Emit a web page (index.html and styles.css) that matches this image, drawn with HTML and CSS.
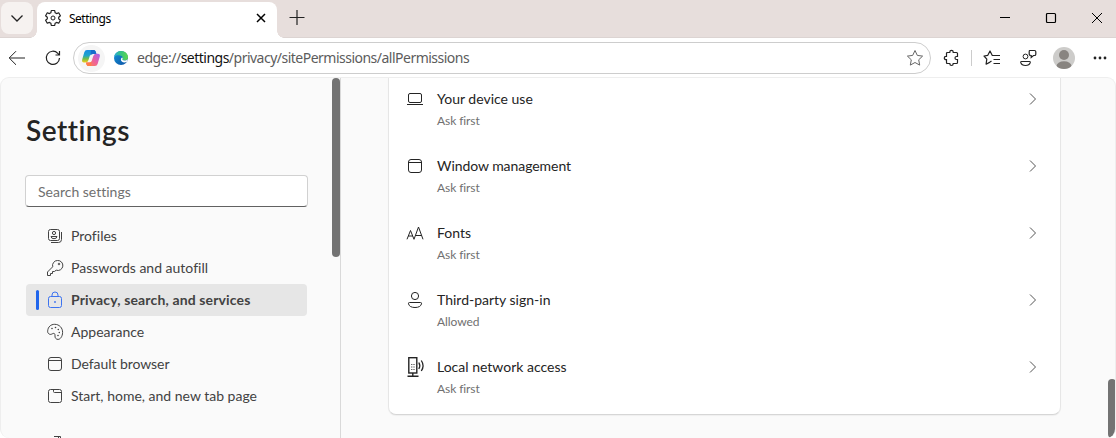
FILE: index.html
```html
<!DOCTYPE html>
<html lang="en">
<head>
<meta charset="utf-8">
<title>Settings</title>
<link rel="stylesheet" href="styles.css">
</head>
<body>
<div class="window">
  <header class="tabstrip">
    <div class="tab-menu"><svg width="16" height="16" viewBox="0 0 16 16"><path d="M2.500 5.500 8 11l5.500-5.500" stroke-width="1.300"/></svg></div>
    <div class="tab">
      <svg width="18" height="18" viewBox="0 0 18 18"><path d="M7.300 1.500h3.400l.4 2.200 1.500.9 2.100-.8 1.700 2.900-1.700 1.500v1.700l1.700 1.400-1.700 2.900-2.100-.8-1.500.9-.4 2.200H7.300l-.4-2.200-1.500-.9-2.100.8-1.700-2.900 1.700-1.400V8.200L1.600 6.700l1.700-2.900 2.100.8 1.500-.9z" stroke-linejoin="round" stroke-width="1.200"/><circle cx="9" cy="9" r="2"/></svg>
      <span class="tab-title">Settings</span>
      <svg class="tab-close" width="10" height="10" viewBox="0 0 10 10"><path d="m1 1 8 8M9 1 1 9" stroke-width="1.500"/></svg>
    </div>
    <svg class="tab-new" width="16" height="16" viewBox="0 0 16 16"><path d="M8 1v15M.5 8.500h15" stroke-width="1.200"/></svg>
    <div class="controls">
      <svg width="12" height="12" viewBox="0 0 12 12"><path d="M1 5.500h10"/></svg>
      <svg width="12" height="12" viewBox="0 0 12 12"><rect x="1.500" y="1.500" width="9" height="9" rx="1" stroke-width="1.200"/></svg>
      <svg width="12" height="12" viewBox="0 0 12 12"><path d="m1 1 10 10M11 1 1 11"/></svg>
    </div>
  </header>
  <nav class="toolbar">
    <svg class="back" width="18" height="16" viewBox="0 0 18 16"><path d="M1.500 8H17M8 1.200 1.200 8 8 14.800"/></svg>
    <svg class="reload" width="16" height="16" viewBox="0 0 16 16"><path d="M14.500 8A6.600 6.600 0 1 1 12.800 3.400L14.500 5M14.500 1v4h-4" stroke-width="1.200"/></svg>
    <div class="address">
      <span class="copilot"><svg width="20" height="18" viewBox="0 0 20 18">
        <defs>
          <linearGradient id="cool" x1="0" y1="0" x2="0" y2="1"><stop offset="0" stop-color="#188be5"/><stop offset=".45" stop-color="#1fa5c8"/><stop offset=".7" stop-color="#72bd48"/><stop offset="1" stop-color="#f5cc16"/></linearGradient>
          <linearGradient id="warm" x1="1" y1="0" x2="0" y2="1"><stop offset="0" stop-color="#a564ed"/><stop offset=".5" stop-color="#ee609b"/><stop offset="1" stop-color="#ff8a42"/></linearGradient>
        </defs>
        <path class="cool" d="M6 1h6.500q1.500 0 2 1.500L15.200 5H11q-1.600 0-2.100 1.600L7.500 11q-.8 2.500-3 2.500H3Q.5 13.500 1.200 10.500L3.300 3.200Q4 1 6 1z"/>
        <path class="blue" d="M10 1h3q1.200 0 1.700 1.500L15.500 5H12q-2 0-2.500 1.600z"/>
        <path class="warm" d="M14 17H7.500q-1.500 0-2-1.500L5 13.500h3.500q1.700 0 2.200-1.600L12.300 7q.8-2.200 3-2.200h1.500q2.700 0 2 2.800l-2.100 7.200Q16 17 14 17z"/>
        <path class="orange" d="M10 17H7.500Q6 17 5.500 15.500L5 13.500h3.500q1.500 0 2-1.500z"/>
      </svg></span>
      <svg class="edge" width="14" height="14" viewBox="0 0 14 14">
        <defs><linearGradient id="green"><stop offset="0" stop-color="#2baad8"/><stop offset=".5" stop-color="#36c47f"/><stop offset="1" stop-color="#60d64b"/></linearGradient><linearGradient id="deep" x1="0" y1="0" x2="1" y2="1"><stop offset="0" stop-color="#1595d6"/><stop offset="1" stop-color="#0b4fa5"/></linearGradient></defs>
        <circle class="deep" cx="7" cy="7" r="7"/>
        <path class="green" d="M.1 6C.7 2.500 3.500 0 7 0c4 0 7 2.800 7 6.200 0 2.100-1.500 3.300-3.500 3.300-1.800 0-2.500-.7-2-1.400C9.300 6.800 8.500 5 6 4.500 3.500 4 1.300 4.600.1 6z"/>
        <path class="hole" d="M8.500 8.100c-.5.900.4 1.500 2 1.400 1.300 0 2.500-.5 3.300-1.500l-.4 2.500c-3.200 1.900-6.600.6-6.500-2 0-1 .5-1.700 1.300-2.100.6.500.7 1.100.3 1.700z"/>
      </svg>
      <span class="url">edge://<b>settings</b>/privacy/sitePermissions/allPermissions</span>
      <svg class="star" width="18" height="18" viewBox="0 0 18 18"><path d="m9 1.500 2.300 4.900 5.300.7-3.900 3.700 1 5.300L9 13.500l-4.700 2.600 1-5.300L1.400 7.100l5.300-.7z" stroke-linejoin="round"/></svg>
    </div>
    <div class="tools">
      <svg class="puzzle" width="16" height="16" viewBox="0 0 16 16"><path d="M2.500 3.500q0-1 1-1h2.300V2a1.700 1.700 0 0 1 3.400 0v.5h3.300q1 0 1 1v3h-1a1.500 1.500 0 0 0 0 3h1v3q0 1-1 1H9.200v.3a1.700 1.700 0 0 1-3.400 0v-.3H3.500q-1 0-1-1V9.700H2a1.700 1.700 0 0 1 0-3.400h.5z" stroke-width="1.200"/></svg>
      <i class="divider"></i>
      <svg class="favorites" width="18" height="16" viewBox="0 0 18 16"><path d="M11 5.500H9.300L7 1 4.800 5.300 1 6l2.800 3.200-.7 5L7 12.100M10.500 5.500H17M10.500 9.500H17M10.500 13.500H17M7 12l1.500-1" stroke-linejoin="round" stroke-width="1.200"/></svg>
      <svg class="feedback" width="18" height="18" viewBox="0 0 18 18"><circle cx="6.500" cy="7.500" r="2.400"/><path d="M2.500 12.500h8q1 0 .7 1.200c-.6 2-2.400 2.800-4.700 2.800s-4.100-.8-4.700-2.800q-.3-1.200.7-1.200zM10.500 1.500h5q1.300 0 1.300 1.300v2.400q0 1.300-1.300 1.300h-1l-2.300 2V6.500q-2 0-2-1.300V2.800q0-1.300.3-1.300z" stroke-width="1.200"/></svg>
      <svg class="avatar" width="22" height="22" viewBox="0 0 22 22"><defs><clipPath id="round"><circle cx="11" cy="11" r="11"/></clipPath></defs><circle class="face" cx="11" cy="11" r="11"/><g class="person" clip-path="url(#round)"><circle cx="11" cy="8" r="5"/><ellipse cx="11" cy="19" rx="7.500" ry="4.700"/></g></svg>
      <svg class="dots" width="14" height="4" viewBox="0 0 14 4"><circle cx="2" cy="2" r="1.400"/><circle cx="7" cy="2" r="1.400"/><circle cx="12" cy="2" r="1.400"/></svg>
    </div>
  </nav>
  <div class="page">
    <aside class="sidebar">
      <h1>Settings</h1>
      <div class="search">Search settings</div>
      <ul class="menu">
        <li><svg width="16" height="16" viewBox="0 0 16 16"><rect x="1.500" y="1.500" width="11" height="11" rx="2"/><circle cx="7" cy="5" r="1.600"/><path d="M4 8.500h6q-.2 2.200-3 2.200t-3-2.200zM14.500 4v7.500q0 3-3 3H4"/></svg><span>Profiles</span></li>
        <li><svg width="18" height="18" viewBox="0 0 18 18"><path d="M11.500 1.500a5 5 0 0 0-4.800 6.300L1.500 13v3.500h3v-2h2v-2h1.900l1.800-1.300A5 5 0 1 0 11.500 1.500z" stroke-linejoin="round"/><circle cx="13" cy="5" r=".8"/></svg><span>Passwords and autofill</span></li>
        <li class="current"><svg width="16" height="18" viewBox="0 0 16 18"><rect x="1.500" y="5.500" width="13" height="11" rx="2"/><path d="M5 5.500V4a3 3 0 0 1 6 0v1.500"/><circle cx="8" cy="11" r=".6"/></svg><span>Privacy, search, and services</span></li>
        <li><svg width="18" height="18" viewBox="0 0 18 18"><path d="M1.700 7.800C2 4 4.700 1.300 8.700 1.300c4.600 0 8 3.600 7.900 8.200-.1 3.900-2.200 6.900-4.600 6.900-2 0-3.200-1.600-3-3.500.2-2.100-.8-3-2.200-2.300-1.500.8-2.400 1.100-3.500.5C1.900 10.300 1.500 9.200 1.700 7.800z"/><g class="paint"><circle cx="6" cy="5.500" r=".8"/><circle cx="9.500" cy="4.500" r=".8"/><circle cx="12.300" cy="6.500" r=".8"/><circle cx="13.300" cy="9.500" r=".8"/><circle cx="12" cy="12.500" r=".8"/></g></svg><span>Appearance</span></li>
        <li><svg width="16" height="16" viewBox="0 0 16 16"><rect x="1.500" y="1.500" width="13" height="13" rx="2.500"/><path d="M1.500 4.500h13"/></svg><span class="snug">Default browser</span></li>
        <li><svg width="16" height="16" viewBox="0 0 16 16"><rect x="1.500" y="1.500" width="13" height="13" rx="2"/><path d="M6.500 1.500v2q0 1 1 1h7"/></svg><span>Start, home, and new tab page</span></li>
        <li class="next"><svg width="16" height="16" viewBox="0 0 16 16"><path d="M7 1.500h6.500V8M11.500 4V1.500"/></svg></li>
      </ul>
      <i class="thumb"></i>
    </aside>
    <main class="content">
      <section class="card">
        <div class="row"><svg width="18" height="18" viewBox="0 0 18 18"><rect x="2.500" y="3.500" width="13" height="9" rx="1.500"/><path d="M1 14.500h16"/></svg><div class="label"><span>Your device use</span><small>Ask first</small></div><svg class="chevron" width="8" height="14" viewBox="0 0 8 14"><path d="m1 1.500 5.500 5.500L1 12.500"/></svg></div>
        <div class="row"><svg width="18" height="18" viewBox="0 0 18 18"><rect x="2.500" y="2.500" width="13" height="13" rx="2.500"/><path d="M2.500 5.500h13"/></svg><div class="label"><span class="snug">Window management</span><small>Ask first</small></div><svg class="chevron" width="8" height="14" viewBox="0 0 8 14"><path d="m1 1.500 5.500 5.500L1 12.500"/></svg></div>
        <div class="row"><svg width="18" height="18" viewBox="0 0 18 18"><path d="M1 15.300 4.500 6.500 8 15.300M2.200 12h4.600M8 15.300 12.500 3 17 15.300M9.500 11.500h6" stroke-linejoin="round"/></svg><div class="label"><span>Fonts</span><small>Ask first</small></div><svg class="chevron" width="8" height="14" viewBox="0 0 8 14"><path d="m1 1.500 5.500 5.500L1 12.500"/></svg></div>
        <div class="row"><svg width="18" height="18" viewBox="0 0 18 18"><circle cx="9" cy="5" r="3.600"/><path d="M3.500 11.500h11q1.300 0 1 1.300c-.6 2.500-2.900 3.700-6.500 3.700s-5.900-1.200-6.500-3.700q-.3-1.300 1-1.300z"/></svg><div class="label"><span>Third-party sign-in</span><small>Allowed</small></div><svg class="chevron" width="8" height="14" viewBox="0 0 8 14"><path d="m1 1.500 5.500 5.500L1 12.500"/></svg></div>
        <div class="row"><svg class="server" width="18" height="22" viewBox="0 0 18 22"><rect x="2.800" y="1.700" width="8" height="15.300" stroke-width="1.400"/><path d="M6.800 17v3M1.500 20.300h11" stroke-width="1.400"/><path d="M5.800 8v6M8 8v6" stroke-dasharray="1 1.500"/><path d="M12.800 6.500q2 3.200 0 6.500M15.300 4.500q3.500 5.200 0 10.500" stroke-width="1.300"/></svg><div class="label"><span>Local network access</span><small>Ask first</small></div><svg class="chevron" width="8" height="14" viewBox="0 0 8 14"><path d="m1 1.500 5.500 5.500L1 12.500"/></svg></div>
      </section>
      <i class="thumb"></i>
    </main>
  </div>
</div>
</body>
</html>
```
FILE: styles.css
```css
* { box-sizing: border-box; }
body { margin: 0; }
svg { display: block; flex: none; fill: none; stroke: currentColor; stroke-width: 1; overflow: visible; }
.window { width: 1116px; height: 438px; overflow: hidden; display: flex; flex-direction: column; background: #fff; color: #222; font-family: "Noto Sans", sans-serif; }

.tabstrip { height: 38px; flex: none; display: flex; background: #e7dedc; border-bottom: 1px solid #dcd4d2; }
.tab-menu { width: 32px; height: 32px; margin: 2px 4px 0 1px; border-radius: 8px; background: #f6f2f0; display: flex; align-items: center; justify-content: center; }
.tab { position: relative; width: 240px; height: 36px; margin-top: 2px; padding: 0 11px 4px 7px; display: flex; align-items: center; background: #fff; border-radius: 8px 8px 0 0; }
.tab::before, .tab::after { content: ""; position: absolute; bottom: 0; width: 7px; height: 7px; }
.tab::before { left: -7px; background: radial-gradient(circle at 0 0, transparent 6.500px, #fff 7px); }
.tab::after { right: -7px; background: radial-gradient(circle at 100% 0, transparent 6.500px, #fff 7px); }
.tab-title { margin-left: 7px; font-size: 12px; letter-spacing: -.5px; color: #000; }
.tab-close { margin-left: auto; color: #000; }
.tab-new { margin: 9px 0 0 12px; }
.controls { margin: 12px 13px 0 auto; display: flex; gap: 34px; color: #000; }

.toolbar { height: 39px; flex: none; display: flex; align-items: center; padding-top: 1px; }
.back { margin-left: 8px; }
.reload { margin-left: 19px; }
.address { width: 858px; height: 32px; margin-left: 12px; padding: 0 6px 0 4px; display: flex; align-items: center; border: 1px solid #cdcdcd; border-radius: 16px; }
.copilot { width: 27px; height: 27px; border-radius: 50%; background: #f5f5f5; display: flex; align-items: center; justify-content: center; }
.copilot svg { margin-right: 1px; }
.copilot svg, .edge, .person, .face { stroke: none; }
.cool { fill: url(#cool); }
.blue { fill: #176dcc; }
.warm { fill: url(#warm); }
.orange { fill: #ff7b48; }
.edge { margin-left: 9px; }
.deep { fill: url(#deep); }
.green { fill: url(#green); }
.hole { fill: #fff; }
.url { margin-left: 9px; font-size: 14px; line-height: 20px; letter-spacing: -.51px; white-space: nowrap; color: #5c5c5c; }
.url b { font-weight: 400; color: #111; }
.star { margin-left: auto; color: #666; }
.tools { display: flex; align-items: center; }
.puzzle { margin-left: 13px; }
.divider { width: 1px; height: 16px; margin-left: 11px; background: #ccc; }
.favorites { margin-left: 11px; }
.feedback { margin-left: 18px; }
.avatar { margin-left: 16px; }
.face { fill: #cdccca; }
.person { fill: #888480; }
.dots { margin-left: 18px; fill: currentColor; stroke: none; }

.page { flex: 1; min-height: 0; display: flex; background: #fafafa; border: 1px solid #eee; border-bottom: 0; border-radius: 9px; overflow: hidden; font-family: Lato, sans-serif; font-variant-ligatures: none; }
.sidebar { position: relative; width: 340px; height: 361px; flex: none; padding: 34px 32px 0 24px; border-right: 1px solid #d9d9d9; }
h1 { margin: 0 0 0 1px; font-size: 28px; line-height: 36px; font-weight: 600; letter-spacing: .5px; color: #242424; }
.search { height: 32px; margin-top: 27px; padding: 0 12px; font-size: 14px; line-height: 32px; color: #707070; background: #fff; border: 1px solid #d1d1d1; border-bottom-color: #616161; border-radius: 4px; }
.menu { list-style: none; margin: 13px 0 0; padding: 0; font-size: 14px; line-height: 20px; color: #424242; }
.menu li { width: 283px; height: 32px; display: flex; align-items: center; padding-left: 22px; border-radius: 4px; white-space: nowrap; }
.menu li svg { width: 16px; margin-right: 8px; }
.menu li svg[width="18"] { width: 18px; margin: 0 7px 0 -1px; }
.menu .current { position: relative; width: 281px; margin-left: 1px; padding-left: 21px; background: #e6e6e6; font-weight: 700; letter-spacing: .14px; }
.current::before { content: ""; position: absolute; left: 10px; top: 6px; width: 3px; height: 20px; border-radius: 2px; background: #1f65ec; }
.current svg { color: #3c73f0; }
.snug { letter-spacing: -.06px; }
.paint { fill: currentColor; stroke: none; }
.menu .next { margin-top: 23px; align-items: flex-start; }
.thumb { position: absolute; background: #737373; border-radius: 4px; }
.sidebar .thumb { right: 0; top: 0; width: 8px; height: 179px; }

.content { position: relative; flex: 1; padding-left: 47px; }
.card { width: 673px; height: 337px; padding-top: 9px; background: #fff; border: 1px solid #e6e6e6; border-top: 0; border-bottom-color: #d6d6d6; border-radius: 0 0 8px 8px; box-shadow: 0 1px 1px #0000000c; }
.row { height: 67px; padding: 3px 23px 0 17px; display: flex; align-items: flex-start; color: #242424; }
.row > svg:not(.chevron) { width: 18px; }
.row > .server { margin-top: -2px; }
.label { margin: -1px 0 0 13px; display: flex; flex-direction: column; font-size: 14px; line-height: 20px; white-space: nowrap; }
.label small { margin-top: 3px; font-size: 12px; line-height: 18px; letter-spacing: -.08px; color: #707070; }
.chevron { margin: 2px 0 0 auto; color: #555; }
.content .thumb { right: -1px; bottom: 0; width: 8px; height: 59px; }
```
